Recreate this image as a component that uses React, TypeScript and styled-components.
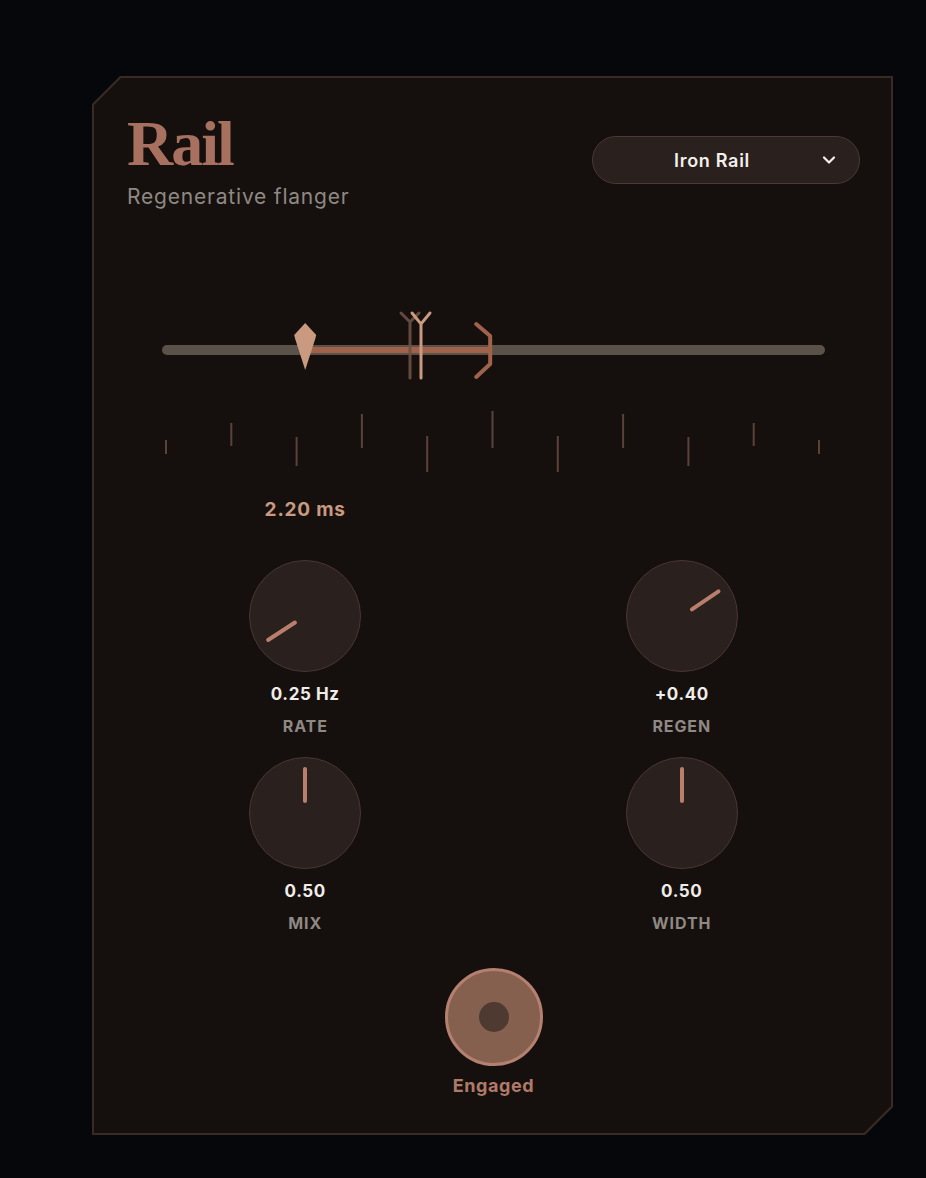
import { createGlobalStyle } from 'styled-components';
import styled from 'styled-components';
import { ChevronDown } from 'lucide-react';

const ACCENT = '#a8705f';
const ACCENT_LIGHT = '#c99a80';
const RUST = '#a0624a';
const MUTED = '#8f8883';

const GlobalStyle = createGlobalStyle`
  html, body {
    margin: 0;
    padding: 0;
    background: #05070a;
  }
  body {
    font-family: Inter, "Noto Sans", sans-serif;
    -webkit-font-smoothing: antialiased;
  }
`;

const Page = styled.div`
  min-height: 1178px;
  padding: 76px 33px 0 92px;
  box-sizing: border-box;
`;

const Frame = styled.div`
  width: 801px;
  height: 1059px;
  padding: 2px;
  box-sizing: border-box;
  background: #3a2a24;
  clip-path: polygon(28px 0, 100% 0, 100% calc(100% - 28px), calc(100% - 28px) 100%, 0 100%, 0 28px);
`;

const Panel = styled.div`
  height: 100%;
  box-sizing: border-box;
  background: #15100e;
  padding: 34px 31px 0 33px;
  display: flex;
  flex-direction: column;
  clip-path: polygon(27px 0, 100% 0, 100% calc(100% - 27px), calc(100% - 27px) 100%, 0 100%, 0 27px);
`;

const Header = styled.div`
  display: flex;
  justify-content: space-between;
  align-items: flex-start;
`;

const TitleBlock = styled.div`
  display: flex;
  flex-direction: column;
`;

const Title = styled.h1`
  margin: 0;
  font-family: "Liberation Serif", "DejaVu Serif", serif;
  font-weight: 700;
  font-size: 64px;
  line-height: 1;
  letter-spacing: -2px;
  color: ${ACCENT};
`;

const Subtitle = styled.div`
  margin-top: 9px;
  font-size: 21px;
  line-height: 24px;
  letter-spacing: 0.8px;
  color: ${MUTED};
`;

const Select = styled.button`
  margin-top: 24px;
  width: 268px;
  height: 48px;
  box-sizing: border-box;
  border-radius: 24px;
  border: 1.5px solid #4d3832;
  background: #2a201d;
  color: #f4f0ec;
  display: flex;
  align-items: center;
  padding: 0 20px 0 12px;
  font-family: Inter, sans-serif;
  font-weight: 600;
  font-size: 18px;
  letter-spacing: 0.7px;
  cursor: pointer;
`;

const SelectText = styled.span`
  flex: 1;
  text-align: center;
`;

const SliderWrap = styled.div`
  margin-top: 101px;
  padding: 35px 35px;
`;

const Track = styled.div`
  position: relative;
  height: 10px;
  border-radius: 5px;
  background: #5a5249;
`;

const Fill = styled.div`
  position: absolute;
  top: 2px;
  height: 6px;
  background: ${RUST};
`;

const Overlay = styled.svg`
  position: absolute;
  overflow: visible;
`;

const Ticks = styled.svg`
  display: block;
  margin: 15px 35px 0;
`;

const ReadoutRow = styled.div`
  margin-top: 24px;
  padding: 0 35px;
  display: flex;
`;

const Readout = styled.div`
  transform: translateX(-50%);
  font-weight: 700;
  font-size: 19px;
  line-height: 22px;
  letter-spacing: 0.8px;
  color: ${ACCENT_LIGHT};
  white-space: nowrap;
`;

const KnobGrid = styled.div`
  margin-top: 39px;
  display: grid;
  grid-template-columns: 1fr 1fr;
  column-gap: 20px;
  row-gap: 21px;
`;

const KnobCell = styled.div`
  display: flex;
  flex-direction: column;
  align-items: center;
`;

const Dial = styled.div`
  position: relative;
  width: 112px;
  height: 112px;
  box-sizing: border-box;
  border-radius: 50%;
  background: #2a201e;
  border: 1px solid #4a3630;
`;

const Pointer = styled.div`
  position: absolute;
  left: 50%;
  top: 50%;
  width: 4px;
  height: 36px;
  margin-left: -2px;
  margin-top: -46px;
  border-radius: 2px;
  background: #b97f6c;
  transform-origin: 2px 46px;
`;

const KnobValue = styled.div`
  margin-top: 12px;
  font-weight: 700;
  font-size: 17px;
  line-height: 20px;
  letter-spacing: 0.6px;
  color: #f0ece8;
`;

const KnobLabel = styled.div`
  margin-top: 12px;
  font-weight: 700;
  font-size: 16px;
  line-height: 20px;
  letter-spacing: 0.9px;
  color: ${MUTED};
`;

const BypassBlock = styled.div`
  margin-top: 35px;
  display: flex;
  flex-direction: column;
  align-items: center;
`;

const BypassButton = styled.button`
  width: 98px;
  height: 98px;
  border-radius: 50%;
  box-sizing: border-box;
  border: 3px solid #b58070;
  background: #86604f;
  display: flex;
  align-items: center;
  justify-content: center;
  padding: 0;
  cursor: pointer;
`;

const BypassDot = styled.span`
  width: 30px;
  height: 30px;
  border-radius: 50%;
  background: #4f3a32;
`;

const BypassLabel = styled.div`
  margin-top: 9px;
  font-weight: 700;
  font-size: 18px;
  line-height: 22px;
  letter-spacing: 0.6px;
  color: #b07a68;
`;

const Knob = ({ value, label, angle }: { value: string; label: string; angle: number }) => (
  <KnobCell>
    <Dial>
      <Pointer style={{ transform: `rotate(${angle}deg)` }} />
    </Dial>
    <KnobValue>{value}</KnobValue>
    <KnobLabel>{label}</KnobLabel>
  </KnobCell>
);

const TRACK_W = 663;
const thumbPct = 21.6;
const fillEndPct = 49.5;

const tickSpans: [number, number][] = [
  [35, 49], [18, 41], [32, 61], [9, 43], [31, 67], [6, 43],
  [31, 67], [9, 43], [32, 61], [18, 41], [35, 49],
];

const knobs = [
  { value: '0.25 Hz', label: 'RATE', angle: -123 },
  { value: '+0.40', label: 'REGEN', angle: 56 },
  { value: '0.50', label: 'MIX', angle: 0 },
  { value: '0.50', label: 'WIDTH', angle: 0 },
];

const x = (pct: number) => (pct / 100) * TRACK_W;

export default function App() {
  const tx = x(thumbPct);
  return (
    <>
      <GlobalStyle />
      <Page>
        <Frame>
          <Panel>
            <Header>
              <TitleBlock>
                <Title>Rail</Title>
                <Subtitle>Regenerative flanger</Subtitle>
              </TitleBlock>
              <Select>
                <SelectText>Iron Rail</SelectText>
                <ChevronDown size={20} strokeWidth={2.6} />
              </Select>
            </Header>

            <SliderWrap>
              <Track>
                <Fill style={{ left: `${thumbPct}%`, width: `${fillEndPct - thumbPct}%` }} />
                <Overlay width={TRACK_W} height={80} viewBox={`0 -38 ${TRACK_W} 80`} style={{ left: 0, top: -33 }}>
                  {/* ghost delay tap */}
                  <g stroke="#6e5045" strokeWidth="3" strokeLinecap="round" fill="none" opacity="0.9">
                    <path d="M239 -37 L248 -28 L257 -37 M248 -28 L248 28" />
                  </g>
                  {/* current tap */}
                  <g stroke={ACCENT_LIGHT} strokeWidth="3" strokeLinecap="round" fill="none">
                    <path d="M250 -37 L259 -26 L268 -37 M259 -26 L259 28" />
                  </g>
                  {/* bracket */}
                  <path
                    d={`M${x(fillEndPct) - 14} -26 L${x(fillEndPct)} -14 L${x(fillEndPct)} 14 L${x(fillEndPct) - 14} 27`}
                    stroke={RUST}
                    strokeWidth="4"
                    strokeLinecap="round"
                    strokeLinejoin="round"
                    fill="none"
                  />
                  {/* thumb */}
                  <polygon
                    points={`${tx} -27 ${tx + 11} -15 ${tx + 10} -11 ${tx} 20 ${tx - 10} -11 ${tx - 11} -15`}
                    fill={ACCENT_LIGHT}
                  />
                </Overlay>
              </Track>
            </SliderWrap>

            <Ticks width={TRACK_W} height={70} viewBox={`0 0 ${TRACK_W} 70`}>
              {tickSpans.map(([a, b], i) => {
                const tx2 = 4 + i * 65.3;
                return <line key={i} x1={tx2} x2={tx2} y1={a} y2={b} stroke="#5a4238" strokeWidth="2" />;
              })}
            </Ticks>

            <ReadoutRow>
              <Readout style={{ marginLeft: `${thumbPct}%` }}>2.20 ms</Readout>
            </ReadoutRow>

            <KnobGrid>
              {knobs.map((k) => (
                <Knob key={k.label} {...k} />
              ))}
            </KnobGrid>

            <BypassBlock>
              <BypassButton aria-label="Bypass">
                <BypassDot />
              </BypassButton>
              <BypassLabel>Engaged</BypassLabel>
            </BypassBlock>
          </Panel>
        </Frame>
      </Page>
    </>
  );
}
